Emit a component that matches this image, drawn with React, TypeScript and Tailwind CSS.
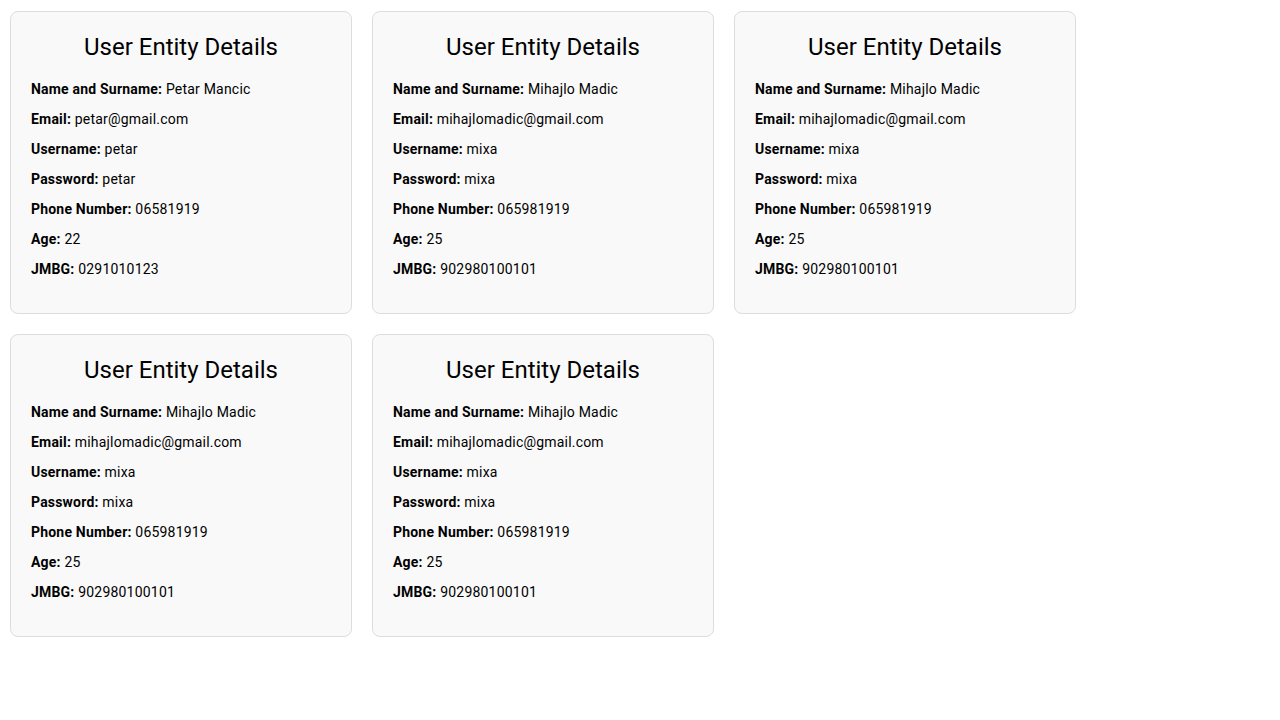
const users = [
  {
    name: "Petar Mancic",
    email: "petar@gmail.com",
    username: "petar",
    password: "petar",
    phone: "06581919",
    age: 22,
    jmbg: "0291010123",
  },
  {
    name: "Mihajlo Madic",
    email: "mihajlomadic@gmail.com",
    username: "mixa",
    password: "mixa",
    phone: "065981919",
    age: 25,
    jmbg: "902980100101",
  },
  {
    name: "Mihajlo Madic",
    email: "mihajlomadic@gmail.com",
    username: "mixa",
    password: "mixa",
    phone: "065981919",
    age: 25,
    jmbg: "902980100101",
  },
  {
    name: "Mihajlo Madic",
    email: "mihajlomadic@gmail.com",
    username: "mixa",
    password: "mixa",
    phone: "065981919",
    age: 25,
    jmbg: "902980100101",
  },
  {
    name: "Mihajlo Madic",
    email: "mihajlomadic@gmail.com",
    username: "mixa",
    password: "mixa",
    phone: "065981919",
    age: 25,
    jmbg: "902980100101",
  },
];

type User = (typeof users)[number];

function UserCard({ user }: { user: User }) {
  const rows: [string, string | number][] = [
    ["Name and Surname", user.name],
    ["Email", user.email],
    ["Username", user.username],
    ["Password", user.password],
    ["Phone Number", user.phone],
    ["Age", user.age],
    ["JMBG", user.jmbg],
  ];

  return (
    <div className="h-[303px] w-[342px] rounded-lg border border-[#dddddd] bg-[#f9f9f9] px-5 pt-[19px] pb-[29px]">
      <h2 className="mb-[11px] text-center text-2xl leading-8 text-black">
        User Entity Details
      </h2>
      {rows.map(([label, value]) => (
        <p key={label} className="text-sm leading-[30px] tracking-[0.2px] text-black">
          <strong className="font-bold">{label}:</strong> {value}
        </p>
      ))}
    </div>
  );
}

export default function App() {
  return (
    <div className="min-h-screen bg-white font-['Roboto',sans-serif]">
      <div className="flex flex-wrap gap-5 px-[10px] pt-[11px]">
        {users.map((user, i) => (
          <UserCard key={i} user={user} />
        ))}
      </div>
    </div>
  );
}
